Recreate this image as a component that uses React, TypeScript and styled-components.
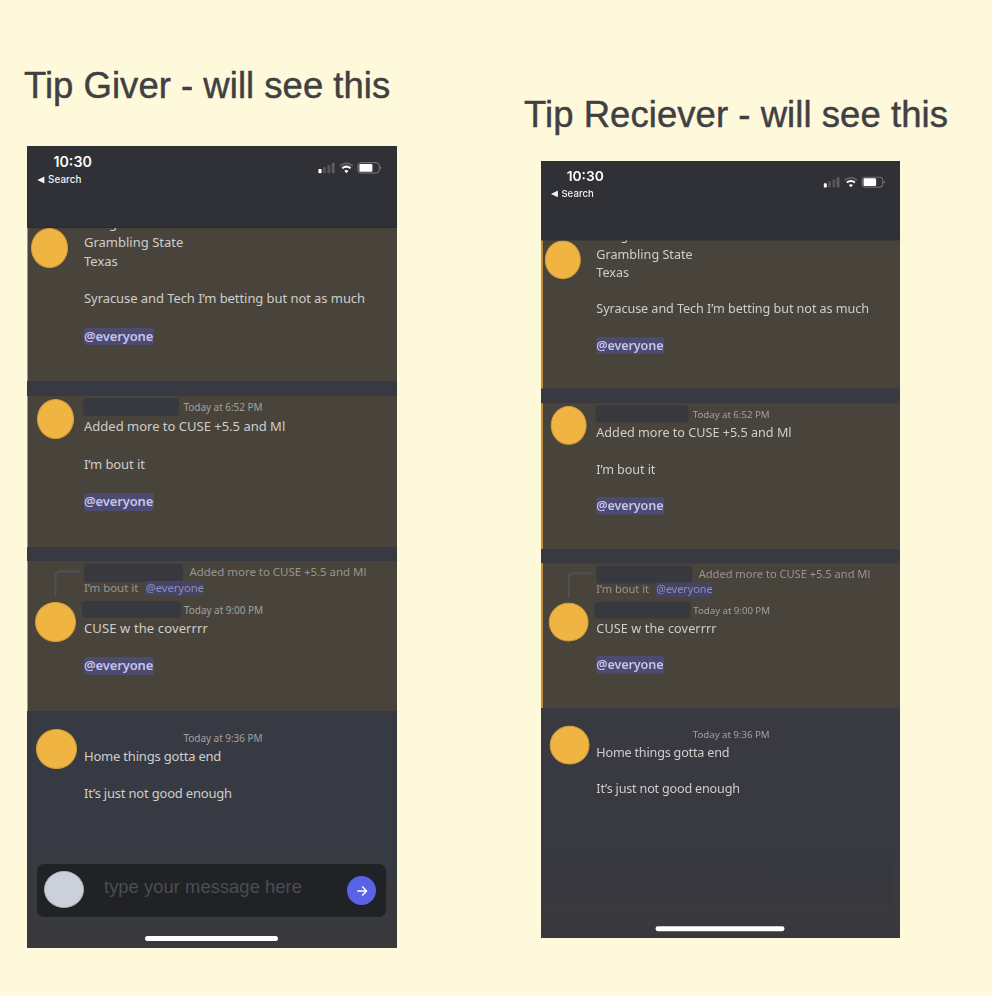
import React from "react";
import styled, { createGlobalStyle, css } from "styled-components";

const GlobalStyle = createGlobalStyle`
  * { box-sizing: border-box; }
  body { margin: 0; background: #fff9dc; }
`;

const Board = styled.main`
  display: flex;
  align-items: flex-start;
  width: 992px;
  height: 996px;
  overflow: hidden;
  background: #fff9dc;
`;

const Column = styled.section<{ $left: number; $top: number }>`
  flex: none;
  width: 424px;
  margin-left: ${(p) => p.$left}px;
  padding-top: ${(p) => p.$top}px;
`;

const Title = styled.h1<{ $tracking: number }>`
  margin: 0;
  height: 42px;
  font: 400 36.5px/43px "Liberation Sans", Arial, sans-serif;
  letter-spacing: ${(p) => p.$tracking}px;
  color: #404042;
  -webkit-text-stroke: 0.45px #404042;
  white-space: nowrap;
`;

const PhoneSlot = styled.div<{ $x: number; $y: number; $small?: boolean }>`
  margin: ${(p) => p.$y}px 0 0 ${(p) => p.$x}px;
  width: 370px;
  height: 802px;
  ${(p) =>
    p.$small &&
    css`
      transform: scale(0.9703, 0.9688);
      transform-origin: 0 0;
      filter: blur(0.45px);
    `}
`;

const Phone = styled.div<{ $edge: number; $base: string }>`
  --edge: ${(p) => p.$edge}px;
  --base: ${(p) => p.$base};
  display: flex;
  flex-direction: column;
  width: 370px;
  height: 802px;
  background: var(--base);
  font-family: "Noto Sans", sans-serif;
  color: #cfcecb;
  overflow: hidden;
`;

const StatusBar = styled.header`
  display: flex;
  flex: none;
  justify-content: space-between;
  height: 82px;
  background: #303136;
  border-bottom: 1px solid #2b2a2b;
`;

const Clock = styled.div`
  padding: 6px 0 0 26.5px;
  font: 600 14.2px/19px Inter, sans-serif;
  color: #fbfbfb;
`;

const BackLink = styled.div`
  display: flex;
  align-items: center;
  gap: 3px;
  padding-left: 10px;
  height: 17px;
  font: 500 9.8px/17px Inter, sans-serif;
  letter-spacing: 0.1px;
  color: #f4f4f4;
`;

const Indicators = styled.svg`
  width: 64px;
  height: 12px;
  margin: 16px 15.5px 0 0;
`;

const Highlight = styled.article<{ $height: number; $plain?: boolean }>`
  display: flex;
  flex: none;
  align-items: flex-start;
  height: ${(p) => p.$height}px;
  overflow: hidden;
  background: ${(p) => (p.$plain ? "transparent" : "#48443b")};
  box-shadow: ${(p) => (p.$plain ? "none" : "inset var(--edge) 0 #cb902c")};
`;

const Divider = styled.div<{ $height: number }>`
  flex: none;
  height: ${(p) => p.$height}px;
  background: var(--base);
`;

const Gutter = styled.div<{ $top: number; $left: number }>`
  flex: none;
  width: 57px;
  padding: ${(p) => p.$top}px 0 0 ${(p) => p.$left}px;
`;

const Avatar = styled.div<{ $width: number }>`
  width: ${(p) => p.$width}px;
  height: 39.5px;
  border-radius: 50%;
  background: #efb442;
  border: 0.5px solid #d39d38;
`;

const Thread = styled.svg`
  display: block;
  width: 27px;
  height: 27px;
  margin-left: 19px;
  margin-bottom: 5px;
`;

const Body = styled.div<{ $top: number }>`
  display: flex;
  flex-direction: column;
  align-items: flex-start;
  margin-top: ${(p) => p.$top}px;
`;

const Line = styled.p<{ $tracking?: number }>`
  margin: 0;
  height: 18.8px;
  font-size: 13px;
  line-height: 18.8px;
  letter-spacing: ${(p) => p.$tracking ?? 0}px;
  white-space: nowrap;
`;

const Mention = styled.span`
  display: inline-block;
  height: 17.5px;
  margin-left: -0.5px;
  padding: 0 0.5px;
  border-radius: 3px;
  background: #4d4b70;
  color: #c4c4ee;
  font-weight: 600;
  line-height: 17.5px;
  letter-spacing: -0.14px;
`;

const Meta = styled.div<{ $pull?: number }>`
  display: flex;
  align-items: center;
  height: 17.5px;
  margin-left: ${(p) => p.$pull ?? 0}px;
`;

const Redaction = styled.span<{ $width: number }>`
  width: ${(p) => p.$width}px;
  height: 17.5px;
  border-radius: 4px;
  background: #38393f;
`;

const Timestamp = styled.time<{ $left: number }>`
  margin-left: ${(p) => p.$left}px;
  padding-top: 1px;
  font-size: 10px;
  line-height: 16px;
  letter-spacing: -0.05px;
  color: #a3a19d;
  white-space: nowrap;
`;

const Quote = styled.span<{ $left?: number }>`
  margin: -1px 0 0 ${(p) => p.$left ?? 0}px;
  font-size: 11.5px;
  line-height: 16px;
  letter-spacing: -0.04px;
  color: #98958f;
  white-space: nowrap;
`;

const QuoteMention = styled.span`
  margin: -1px 0 0 7px;
  height: 15px;
  padding: 0 0.5px;
  border-radius: 3px;
  background: #464463;
  color: #8c8cbe;
  font-size: 11.2px;
  line-height: 14.5px;
`;

const QuoteRow = styled.div`
  display: flex;
  align-items: center;
  height: 14px;
  letter-spacing: -0.05px;
`;

const Gap = styled.div<{ $size: number }>`
  flex: none;
  height: ${(p) => p.$size}px;
`;

const Footer = styled.footer`
  display: flex;
  flex: 1;
  flex-direction: column;
  justify-content: flex-end;
  align-items: center;
  background: linear-gradient(var(--base) 20%, #39393d 95%);
`;

const Composer = styled.div`
  display: flex;
  align-items: center;
  width: 349px;
  height: 53px;
  margin: 0 1px 19px 0;
  padding: 0 10px 0 7px;
  border-radius: 7px;
  background: #212225;
`;

const UserDot = styled.div`
  width: 40px;
  height: 37px;
  margin-bottom: 2px;
  border-radius: 50%;
  background: #ccd0da;
  border: 1px solid #a9b4b4;
`;

const Placeholder = styled.div`
  flex: 1;
  padding: 0 0 7px 20px;
  font: 400 18.4px/22px "Liberation Sans", Arial, sans-serif;
  letter-spacing: 0.03px;
  color: #4a4d53;
`;

const Send = styled.button`
  display: grid;
  place-items: center;
  width: 29px;
  height: 29px;
  padding: 0;
  border: 0;
  border-radius: 50%;
  background: #5a63e6;
`;

const ScrollMark = styled.div`
  align-self: flex-end;
  width: 1px;
  height: 44px;
  margin: 0 10px 22px 0;
  background: #2f3035;
`;

const HomeBar = styled.div`
  width: 133px;
  height: 5px;
  margin: 0 1px 7px 0;
  border-radius: 3px;
  background: #fff;
`;

function StatusIcons() {
  return (
    <Indicators viewBox="0 0 64 12">
      <rect x="0.4" y="7" width="3.2" height="4.3" rx="0.8" fill="#fff" />
      <rect x="5" y="5" width="2.9" height="6.3" rx="0.7" fill="#55565a" />
      <rect x="9.4" y="3" width="2.9" height="8.3" rx="0.7" fill="#55565a" />
      <rect x="13.7" y="0.8" width="2.9" height="10.5" rx="0.7" fill="#5d5e62" />
      <g fill="none" strokeWidth="2">
        <path d="M22 3.9Q28.4 -1.2 34.8 3.9" stroke="#5d5e62" />
        <path d="M24.2 6.3Q28.4 3 32.6 6.3" stroke="#fff" />
      </g>
      <path d="M28.4 11.2L26.3 8.7Q28.4 7.1 30.5 8.7Z" fill="#fff" />
      <rect x="39.9" y="0.7" width="21.4" height="10.3" rx="3" fill="none" stroke="#7d7e81" />
      <rect x="41.4" y="1.9" width="13" height="7.9" rx="1.4" fill="#fff" />
      <path d="M62.3 4.2Q64.3 5.8 62.3 7.6Z" fill="#7d7e81" />
    </Indicators>
  );
}

interface PhoneScreenProps {
  composer?: boolean;
  edge: number;
  base: string;
}

function PhoneScreen({ composer, edge, base }: PhoneScreenProps) {
  return (
    <Phone $edge={edge} $base={base}>
      <StatusBar>
        <div>
          <Clock>10:30</Clock>
          <BackLink>
            <svg width="8" height="8" viewBox="0 0 8 8">
              <path d="M0.3 4L7.4 0.5V7.5Z" fill="#f4f4f4" />
            </svg>
            Search
          </BackLink>
        </div>
        <StatusIcons />
      </StatusBar>

      <Highlight $height={153}>
        <Gutter $top={0.3} $left={3.7}>
          <Avatar $width={37} />
        </Gutter>
        <Body $top={-14}>
          <Line>Morgan State</Line>
          <Line>Grambling State</Line>
          <Line>Texas</Line>
          <Line />
          <Line $tracking={-0.07}>Syracuse and Tech I’m betting but not as much</Line>
          <Line />
          <Line>
            <Mention>@everyone</Mention>
          </Line>
        </Body>
      </Highlight>

      <Divider $height={15} />

      <Highlight $height={151}>
        <Gutter $top={3} $left={9.7}>
          <Avatar $width={37} />
        </Gutter>
        <Body $top={2}>
          <Meta $pull={-1}>
            <Redaction $width={96} />
            <Timestamp $left={4.5}>Today at 6:52 PM</Timestamp>
          </Meta>
          <Gap $size={1.5} />
          <Line>Added more to CUSE +5.5 and Ml</Line>
          <Line />
          <Line $tracking={-0.1}>I’m bout it</Line>
          <Line />
          <Line>
            <Mention>@everyone</Mention>
          </Line>
        </Body>
      </Highlight>

      <Divider $height={14} />

      <Highlight $height={150}>
        <Gutter $top={9} $left={8}>
          <Thread viewBox="0 0 27 27">
            <path d="M1.5 27V6Q1.5 1.5 6 1.5H27" fill="none" stroke="#505156" strokeWidth="2" />
          </Thread>
          <Avatar $width={40.5} />
        </Gutter>
        <Body $top={3}>
          <Meta $pull={-0.5}>
            <Redaction $width={99} />
            <Quote $left={7}>Added more to CUSE +5.5 and Ml</Quote>
          </Meta>
          <QuoteRow>
            <Quote>I’m bout it</Quote>
            <QuoteMention>@everyone</QuoteMention>
          </QuoteRow>
          <Gap $size={5} />
          <Meta $pull={-2}>
            <Redaction $width={98.5} />
            <Timestamp $left={3.5}>Today at 9:00 PM</Timestamp>
          </Meta>
          <Gap $size={0.7} />
          <Line $tracking={0.12}>CUSE w the coverrrr</Line>
          <Line />
          <Line>
            <Mention>@everyone</Mention>
          </Line>
        </Body>
      </Highlight>

      <Highlight $height={110} $plain>
        <Gutter $top={18} $left={9}>
          <Avatar $width={40.5} />
        </Gutter>
        <Body $top={18}>
          <Meta>
            <Timestamp $left={99.5}>Today at 9:36 PM</Timestamp>
          </Meta>
          <Line $tracking={-0.2}>Home things gotta end</Line>
          <Line />
          <Line $tracking={-0.2}>It’s just not good enough</Line>
        </Body>
      </Highlight>

      <Footer>
        {composer ? (
          <Composer>
            <UserDot />
            <Placeholder>type your message here</Placeholder>
            <Send aria-label="Send">
              <svg width="12" height="12" viewBox="0 0 12 12" fill="none" stroke="#fff" strokeWidth="1.4">
                <path d="M1.2 6H10.4M6.2 1.6L10.6 6L6.2 10.4" />
              </svg>
            </Send>
          </Composer>
        ) : (
          <ScrollMark />
        )}
        <HomeBar />
      </Footer>
    </Phone>
  );
}

export default function App() {
  return (
    <>
      <GlobalStyle />
      <Board>
        <Column $left={24} $top={64}>
          <Title $tracking={0.02}>Tip Giver - will see this</Title>
          <PhoneSlot $x={3} $y={40}>
            <PhoneScreen composer edge={1} base="#373a42" />
          </PhoneSlot>
        </Column>
        <Column $left={76} $top={93}>
          <Title $tracking={0.05}>Tip Reciever - will see this</Title>
          <PhoneSlot $x={17} $y={25.5} $small>
            <PhoneScreen edge={2} base="#383941" />
          </PhoneSlot>
        </Column>
      </Board>
    </>
  );
}
